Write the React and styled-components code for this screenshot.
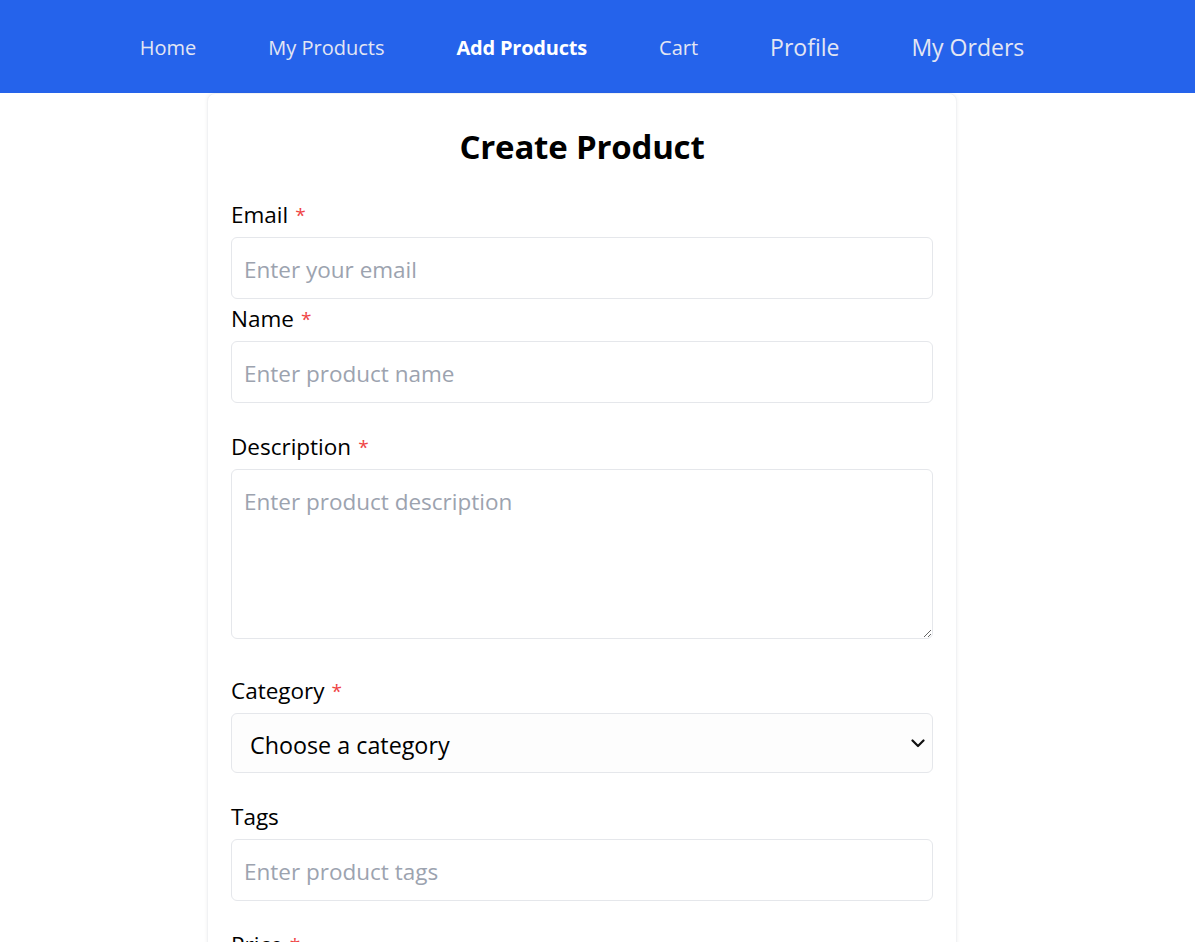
import React from "react";
import styled, { createGlobalStyle } from "styled-components";

const GlobalStyle = createGlobalStyle`
  * { box-sizing: border-box; }
  body {
    margin: 0;
    background: #ffffff;
    font-family: "Open Sans", "Noto Sans", "Liberation Sans", sans-serif;
    color: #000;
  }
`;

const NavBar = styled.nav`
  background: #2563eb;
  height: 93px;
`;

const NavInner = styled.ul`
  width: 1164px;
  height: 100%;
  margin: 0;
  padding: 0;
  list-style: none;
  display: flex;
  align-items: center;
  justify-content: center;
  gap: 72px;
`;

const NavItem = styled.li`
  font-size: ${(p) => (p.$large ? "23px" : "20px")};
  font-weight: ${(p) => (p.$active ? 700 : 400)};
  color: ${(p) => (p.$active ? "#ffffff" : "#e3e6f3")};
  line-height: 1;
  white-space: nowrap;
  letter-spacing: ${(p) => (p.$active ? "-0.2px" : "0")};
  padding-top: 2px;
`;

const Main = styled.main`
  width: 1164px;
`;

const Card = styled.div`
  width: 750px;
  margin: 0 auto;
  background: #fff;
  border: 1px solid #f1f2f4;
  border-radius: 8px;
  box-shadow: 0 0 4px rgba(0, 0, 0, 0.06);
  padding: 33px 23px 40px;
`;

const Title = styled.h1`
  margin: 0 0 32px;
  font-size: 33px;
  line-height: 40px;
  font-weight: 700;
  text-align: center;
  letter-spacing: -0.2px;
`;

const Field = styled.div`
  display: flex;
  flex-direction: column;
  gap: 7px;
  margin-bottom: ${(p) => p.$mb}px;
`;

const Label = styled.label`
  font-size: 22.5px;
  line-height: 30px;
  padding-top: 1px;
  color: #000;
`;

const Star = styled.span`
  color: #ef4444;
  font-size: 19px;
  margin-left: 7px;
  vertical-align: 1px;
`;

const fieldBase = `
  width: 100%;
  border: 1px solid #e5e7eb;
  border-radius: 6px;
  background: #fff;
  font-family: "Open Sans", "Noto Sans", "Liberation Sans", sans-serif;
  font-size: 22.5px;
  color: #111;
  outline: none;
  &::placeholder { color: #9ca3af; }
`;

const TextInput = styled.input`
  ${fieldBase}
  height: 62px;
  padding: 2px 12px 0;
`;

const TextArea = styled.textarea`
  ${fieldBase}
  display: block;
  height: 170px;
  padding: 15px 12px 11px;
  line-height: 1.5;
  resize: vertical;
`;

const SelectWrap = styled.div`
  position: relative;
`;

const Select = styled.select`
  ${fieldBase}
  appearance: none;
  height: 60px;
  padding: 3px 40px 0 18px;
  font-size: 23.3px;
  color: #000;
  background: #fdfdfd;
`;

const Chevron = styled.svg`
  position: absolute;
  right: 8px;
  top: 50%;
  transform: translateY(-50%);
  pointer-events: none;
`;

const SubmitButton = styled.button`
  width: 100%;
  height: 60px;
  border: none;
  border-radius: 6px;
  background: #2563eb;
  color: #fff;
  font-family: inherit;
  font-size: 22px;
  font-weight: 600;
`;

const navLinks = [
  { label: "Home" },
  { label: "My Products" },
  { label: "Add Products", active: true },
  { label: "Cart" },
  { label: "Profile", large: true },
  { label: "My Orders", large: true },
];

export default function App() {
  return (
    <>
      <GlobalStyle />
      <NavBar>
        <NavInner>
          {navLinks.map((l) => (
            <NavItem key={l.label} $active={l.active} $large={l.large}>
              {l.label}
            </NavItem>
          ))}
        </NavInner>
      </NavBar>
      <Main>
        <Card>
          <Title>Create Product</Title>
          <form onSubmit={(e) => e.preventDefault()}>
            <Field $mb={4}>
              <Label>
                Email<Star>*</Star>
              </Label>
              <TextInput type="email" placeholder="Enter your email" />
            </Field>
            <Field $mb={28}>
              <Label>
                Name<Star>*</Star>
              </Label>
              <TextInput type="text" placeholder="Enter product name" />
            </Field>
            <Field $mb={36}>
              <Label>
                Description<Star>*</Star>
              </Label>
              <TextArea placeholder="Enter product description" />
            </Field>
            <Field $mb={28}>
              <Label>
                Category<Star>*</Star>
              </Label>
              <SelectWrap>
                <Select defaultValue="">
                  <option value="">Choose a category</option>
                  <option value="electronics">Electronics</option>
                  <option value="fashion">Fashion</option>
                  <option value="books">Books</option>
                </Select>
                <Chevron width="14" height="14" viewBox="0 0 14 14">
                  <path
                    d="M1.5 4.5 L7 10 L12.5 4.5"
                    fill="none"
                    stroke="#111"
                    strokeWidth="2.2"
                    strokeLinecap="round"
                    strokeLinejoin="round"
                  />
                </Chevron>
              </SelectWrap>
            </Field>
            <Field $mb={28}>
              <Label>Tags</Label>
              <TextInput type="text" placeholder="Enter product tags" />
            </Field>
            <Field $mb={28}>
              <Label>
                Price<Star>*</Star>
              </Label>
              <TextInput type="number" placeholder="Enter product price" />
            </Field>
            <Field $mb={28}>
              <Label>
                Stock<Star>*</Star>
              </Label>
              <TextInput type="number" placeholder="Enter stock quantity" />
            </Field>
            <SubmitButton type="submit">Create</SubmitButton>
          </form>
        </Card>
      </Main>
    </>
  );
}
